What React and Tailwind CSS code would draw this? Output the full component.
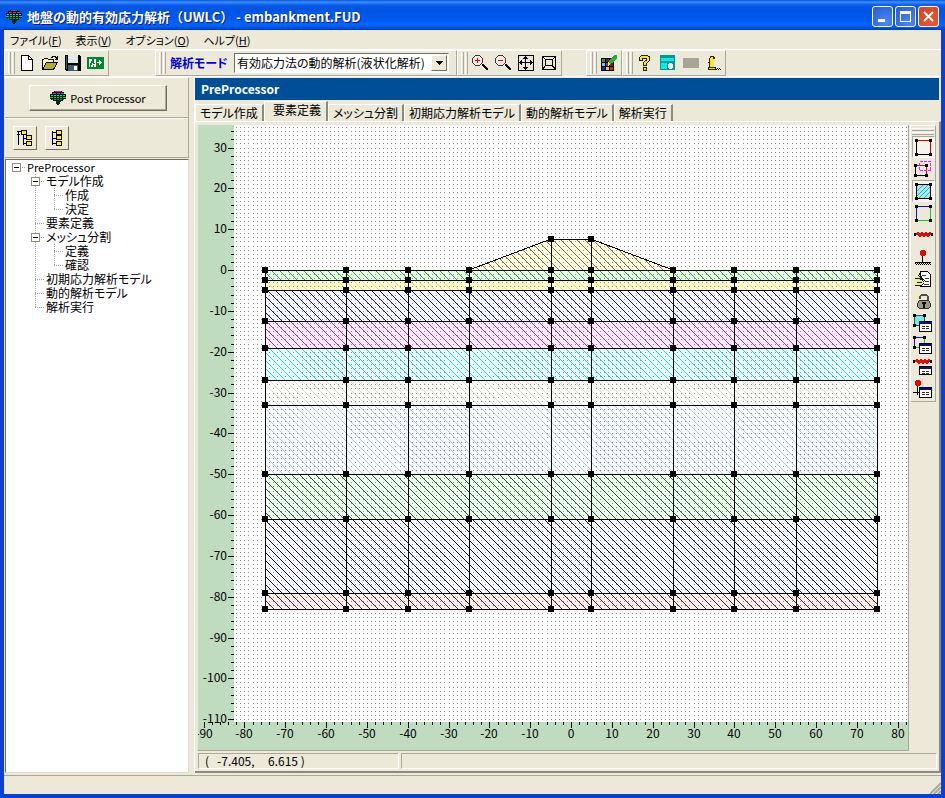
import { useState } from 'react';

const SCALE = 49 / 12;
const px = (v) => Math.round(373 + v * SCALE);
const py = (v) => Math.round(145 - v * SCALE);

const columns = [-75, -55, -40, -25, -5, 5, 25, 40, 55, 75];

const layers = [
  { id: 'l1', top: 0, bottom: -2.5, color: '#10c010', tint: '#ecffec' },
  { id: 'l2', top: -2.5, bottom: -5, color: '#f8ec00', tint: '#ffffe4' },
  { id: 'l3', top: -5, bottom: -12.5, color: '#1010a0', tint: '#f6f6ff' },
  { id: 'l4', top: -12.5, bottom: -19, color: '#c020c0', tint: '#ffeeff' },
  { id: 'l5', top: -19, bottom: -27, color: '#10e0e0', tint: '#ecffff' },
  { id: 'l6', top: -27, bottom: -33, color: '#d4dccb', tint: '#fdfffc' },
  { id: 'l7', top: -33, bottom: -50, color: '#b0c8e0', tint: '#f8fcff' },
  { id: 'l8', top: -50, bottom: -61, color: '#106820', tint: '#f0fff0' },
  { id: 'l9', top: -61, bottom: -79, color: '#101058', tint: '#f8f8ff' },
  { id: 'l10', top: -79, bottom: -83, color: '#681818', tint: '#fff2ee' },
];

const bank = { id: 'bank', color: '#907010', tint: '#fffce8' };
const bankPoints = [[-25, 0], [-5, 7.5], [5, 7.5], [25, 0]];

const range = (from, to, step) => {
  const out = [];
  for (let v = from; v <= to; v += step) out.push(v);
  return out;
};

const tree = [
  { label: 'PreProcessor', cells: ['box'] },
  { label: 'モデル作成', cells: ['none', 'boxMid'] },
  { label: '作成', cells: ['none', 'line', 'tee'] },
  { label: '決定', cells: ['none', 'line', 'end'] },
  { label: '要素定義', cells: ['none', 'tee'] },
  { label: 'メッシュ分割', cells: ['none', 'boxMid'] },
  { label: '定義', cells: ['none', 'line', 'tee'] },
  { label: '確認', cells: ['none', 'line', 'end'] },
  { label: '初期応力解析モデル', cells: ['none', 'tee'] },
  { label: '動的解析モデル', cells: ['none', 'tee'] },
  { label: '解析実行', cells: ['none', 'end'] },
];

const tabs = ['モデル作成', '要素定義', 'メッシュ分割', '初期応力解析モデル', '動的解析モデル', '解析実行'];

const menus = [
  ['ファイル', 'F'],
  ['表示', 'V'],
  ['オプション', 'O'],
  ['ヘルプ', 'H'],
];

function Icon({ w = 16, h = 16, children }) {
  return (
    <svg width={w} height={h} viewBox={`0 0 ${w} ${h}`} shapeRendering="crispEdges" fill="none" aria-hidden="true">
      {children}
    </svg>
  );
}

function LogoIcon() {
  return (
    <Icon>
      <path d="M4 1h8v1h2v2h2v5h-2v1h-1v1h-2v1h-1v2H9v1H7v-1H6v-3H3v-1H1V9H0V4h2V2h2z" fill="#10201c" />
      <path d="M5 1h6v1H5z M3 3h3v1H3z M7 3h3v1H7z M11 3h3v1h-3z" fill="#b030a0" />
      <path d="M1 5h2v1H1z M4 5h2v1H4z M7 5h2v1H7z M10 5h2v1h-2z M13 5h2v1h-2z" fill="#30c8c0" />
      <path d="M0 7h3v1H0z M4 7h2v1H4z M7 7h2v1H7z M10 7h2v1h-2z M13 7h3v1h-3z" fill="#20c848" />
      <path d="M2 9h1v1H2z M4 9h2v1H4z M7 9h2v1H7z M10 9h2v1h-2z M13 9h1v1h-1z" fill="#189840" />
    </Icon>
  );
}

function NewIcon() {
  return (
    <Icon>
      <path d="M2.5 .5h7l4 4v11h-11z" fill="#fff" stroke="#000" />
      <path d="M9.5 .5v4h4" stroke="#000" />
    </Icon>
  );
}

function OpenIcon() {
  return (
    <Icon w={18}>
      <path d="M1.5 14.5v-10h1l1-1h3l1 1h5v3" fill="#ffff90" stroke="#000" />
      <path d="M1.5 14.5l4-7h11l-4 7z" fill="#b0b020" stroke="#000" />
      <path d="M10 2.5h1v-1h3v1h1v1h1M16.5 1v4M14 4.5h3" stroke="#000" />
    </Icon>
  );
}

function SaveIcon() {
  return (
    <Icon>
      <path d="M0 0h15v1h1v15H1v-1H0z" fill="#000" />
      <path d="M3 0h10v8H3z" fill="#e4e8e8" />
      <path d="M3 10h10v6H3z" fill="#406070" />
      <path d="M9 11h3v4H9z" fill="#fff" />
      <path d="M1 1h1v13H1z" fill="#406068" />
    </Icon>
  );
}

function ExitIcon() {
  return (
    <Icon w={17} h={12}>
      <path d="M0 0h17v12H0z" fill="#008830" />
      <path d="M2 2h7v8H2z" fill="#fff" />
      <path d="M5 2h2v2H5z M4 4h3v2H4z M3 6h2v2H3z M6 6h2v1H6z M3 8h1v2H3z M6 8h1v2H6z" fill="#008830" />
      <path d="M10 5.5h5M12.5 3v5M13.5 4v3" stroke="#fff" />
    </Icon>
  );
}

function ZoomIcon({ plus }) {
  return (
    <Icon>
      <path d="M3.5 .5h4l3 3v4l-3 3h-4l-3-3v-4z" fill="#fce6e6" stroke="#383838" />
      <path d="M3 5.5h5" stroke="#e00018" />
      {plus && <path d="M5.5 3v5" stroke="#e00018" />}
      <path d="M10 9h2v1h1v1h1v1h1v1h1v2h-2v-1h-1v-1h-1v-1h-1v-1h-1z" fill="#000" />
    </Icon>
  );
}

function FitIcon() {
  return (
    <Icon>
      <path d="M.5 .5h15v15H.5z M0 7.5h16M7.5 0v16" stroke="#000" />
      <path d="M2 6h1v3H2z M3 5h1v5H3z M12 5h1v5h-1z M13 6h1v3h-1z M6 2h3v1H6z M5 3h5v1H5z M5 12h5v1H5z M6 13h3v1H6z" fill="#000" />
    </Icon>
  );
}

function FrameIcon() {
  return (
    <Icon>
      <path d="M1.5 1.5h13v13h-13z M4.5 4.5h7v6h-7z M2 2l3 3M14 2l-3 3M2 14l3-4M14 14l-3-4" stroke="#000" />
    </Icon>
  );
}

function PaletteIcon() {
  return (
    <Icon>
      <path d="M0 3h13v13H0z" fill="#000" />
      <path d="M1 4h3v3H1z" fill="#20a040" />
      <path d="M5 4h3v3H5z M9 8h3v3H9z" fill="#701850" />
      <path d="M1 8h3v3H1z" fill="#50d8e8" />
      <path d="M5 8h3v3H5z" fill="#a018a8" />
      <path d="M1 12h3v3H1z" fill="#1820e8" />
      <path d="M5 12h3v3H5z" fill="#f0d820" />
      <path d="M9 12h3v3H9z" fill="#e02020" />
      <path d="M13 0h3v3l-5 5-3 2v-4z" fill="#20b040" />
      <path d="M7 7l3 2-3 2z" fill="#f0f020" />
    </Icon>
  );
}

function HelpIcon() {
  return (
    <Icon w={13}>
      <path d="M3 0h7v1h2v5h-1v1h-1v1H9v3H5V7h1V6h1V5h1V4H5v2H1V2h1V1h1z M5 12h4v4H5z" fill="#202000" />
      <path d="M3 1h7v1h1v4h-1v1H9v1H8v2H6V7h1V6h2V3H4v2H2V2h1z M6 13h2v2H6z" fill="#f8e820" />
    </Icon>
  );
}

function WindowIcon() {
  return (
    <Icon>
      <path d="M0 0h15v15H0z" fill="#009898" />
      <path d="M1 3h13v3H1z M1 8h6v6H1z" fill="#10e8e8" />
      <path d="M9 8h3v1h1v4h-1v1H9v-1H8V9h1z" fill="#fff" />
    </Icon>
  );
}

function BlankIcon() {
  return (
    <Icon w={16} h={10}>
      <path d="M0 0h16v10H0z" fill="#a8a498" />
    </Icon>
  );
}

function PersonIcon() {
  return (
    <Icon w={14}>
      <path d="M3 1h4v1h1v2H7v8h2v3H1v-3h1V8H1V7h1V3h1z" fill="#282000" />
      <path d="M4 2h2v1H4z M3 3h3v9H3z M2 13h6v1H2z M6 4h1v8H6z" fill="#f8e820" />
      <path d="M8 12h1v1H8z M9 14h1v1H9z M11 14h1v1h-1z M13 14h1v1h-1z M10 13h1v1h-1z M12 13h1v1h-1z" fill="#000" />
    </Icon>
  );
}

function TreeOpenIcon({ collapsed }) {
  return (
    <Icon>
      {collapsed ? (
        <>
          <path d="M3.5 1v14M3 2.5h4M3 8.5h4M3 13.5h4" stroke="#000" />
          <path d="M7.5 .5h5v4h-5z M7.5 5.5h5v4h-5z M7.5 11.5h5v4h-5z" fill="#fff000" stroke="#000" />
        </>
      ) : (
        <>
          <path d="M1.500 1v14M0 1.500h4M0 4.500h3" stroke="#000" />
          <path d="M6.5 5v10M6 8.500h4M6 13.500h4" stroke="#000" />
          <path d="M4.5 .5h5v4h-5z M9.5 5.5h5v4h-5z M9.5 11.5h5v4h-5z" fill="#fff000" stroke="#000" />
        </>
      )}
    </Icon>
  );
}

function Corners() {
  return <path d="M0 0h3v3H0z M14 0h3v3h-3z M0 14h3v3H0z M14 14h3v3h-3z" fill="#000" />;
}

function MiniWindow({ x, y, h = 10 }) {
  return (
    <g transform={`translate(${x} ${y})`}>
      <path d={`M.5 .5h12v${h}H.5z`} fill="#fff" stroke="#000" />
      <path d="M1 1h12v2H1z" fill="#101080" />
      <path d="M3 5h3v1H3z M7 5h3v1H7z M3 7h3v1H3z M7 7h3v1H7z" fill="#303030" />
    </g>
  );
}

function ZigZag() {
  return (
    <>
      <path d="M2 3l2-2 2 3 2-3 2 3 2-3 2 3 2-3 2 2" stroke="#e80808" strokeWidth="2" />
      <path d="M0 1h2v3H0z M17 1h2v3h-2z" fill="#000" />
    </>
  );
}

const sideTools = [
  {
    label: '要素選択',
    pressed: true,
    icon: (
      <Icon w={17} h={17}>
        <path d="M1.5 1.5v14h14" stroke="#000" />
        <path d="M1.5 1.5h14v14" stroke="#e80000" />
        <Corners />
      </Icon>
    ),
  },
  {
    label: '範囲選択',
    icon: (
      <Icon w={18} h={16}>
        <path d="M1.5 4.5v10h11v-10z" stroke="#000" />
        <path d="M2 4.5h10v9" stroke="#d01010" />
        <path d="M5.5 .5h11v9h-11z" stroke="#ff10ff" strokeDasharray="3 1" />
        <path d="M0 3h3v3H0z M11 3h3v3h-3z M0 13h3v3H0z M11 13h3v3h-3z" fill="#000" />
      </Icon>
    ),
  },
  {
    label: '材料',
    pressed: true,
    icon: (
      <Icon w={17} h={17}>
        <path d="M1.5 1.5h14v14h-14z" fill="#a0ecf0" stroke="#000" />
        <path d="M2 8l6-6M2 13L13 2M4 15L15 4M9 15l6-6" stroke="#38a8b8" />
        <Corners />
      </Icon>
    ),
  },
  {
    label: '境界',
    icon: (
      <Icon w={17} h={17}>
        <path d="M1.5 15.5v-14h14" stroke="#1010d0" />
        <path d="M1.5 15.5h14v-14" stroke="#10d010" />
        <Corners />
      </Icon>
    ),
  },
  { label: 'ばね', icon: <Icon w={19} h={6}><ZigZag /></Icon> },
  {
    label: '支点',
    icon: (
      <Icon w={18} h={16}>
        <path d="M8.5 6v7M1 13.5h16" stroke="#000" />
        <path d="M1 14.5h16M2 15.5h16" stroke="#000" strokeDasharray="1 1" />
        <path d="M7 1h4v1h1v4h-1v1H7V6H6V2h1z" fill="#e00808" />
      </Icon>
    ),
  },
  {
    label: '編集',
    icon: (
      <Icon w={18} h={17}>
        <path d="M6.5 .5h7l3 3v12h-10z" fill="#fff" stroke="#000" />
        <path d="M8 4h4v1H8z M11 7h4v1h-4z M11 10h4v1h-4z M10 13h5v1h-5z" fill="#404040" />
        <path d="M1 7h5l4 3v3l-4 2H1z" fill="#f0f080" />
        <path d="M1 7.5h5l4 3M1 14.5h6l3-2M3 11.5h5M4 4l8 7M5 2l3 5" stroke="#101810" />
      </Icon>
    ),
  },
  {
    label: 'ロック',
    icon: (
      <Icon w={15} h={17}>
        <path d="M4 6V3.500l2-2h4l2 2V8" stroke="#505048" strokeWidth="2" />
        <path d="M3 7h10v1h1v2h1v4h-1v1h-1v1H3v-1H2v-1H1v-4h1V8h1z" fill="#303028" />
        <path d="M3 8h10v2h1v4h-1v1H3v-1H2v-4h1z" fill="#98988c" />
        <path d="M6 9h4v2H9v4H7v-4H6z" fill="#101010" />
        <path d="M0 1h2v2H0z M1 4h2v2H1z M0 7h1v2H0z" fill="#f4f470" />
      </Icon>
    ),
  },
  {
    label: '材料一覧',
    icon: (
      <Icon w={20} h={19}>
        <path d="M1.5 1.5h10v10h-10z" fill="#80e4ec" stroke="#205860" />
        <path d="M0 0h3v3H0z M10 0h3v3h-3z M0 10h3v3H0z" fill="#000" />
        <MiniWindow x={6} y={7} />
      </Icon>
    ),
  },
  {
    label: '境界一覧',
    icon: (
      <Icon w={20} h={19}>
        <path d="M1.5 11.5v-10h10" stroke="#1010d0" />
        <path d="M1.5 11.5h5M11.5 1v7" stroke="#10d010" />
        <path d="M0 0h3v3H0z M10 0h3v3h-3z M0 10h3v3H0z" fill="#000" />
        <MiniWindow x={6} y={7} />
      </Icon>
    ),
  },
  {
    label: 'ばね一覧',
    icon: (
      <Icon w={20} h={17}>
        <ZigZag />
        <MiniWindow x={6} y={7} h={8} />
      </Icon>
    ),
  },
  {
    label: '支点一覧',
    icon: (
      <Icon w={20} h={20}>
        <path d="M4.5 6v10M0 13.5h7" stroke="#000" />
        <path d="M3 1h4v1h1v4H7v1H3V6H2V2h1z" fill="#e00808" />
        <MiniWindow x={6} y={8} />
      </Icon>
    ),
  },
];

function Gripper() {
  return (
    <span className="flex shrink-0 gap-px py-px self-stretch">
      <span className="w-[3px] border-l border-r border-l-white border-r-[#aca899]" />
      <span className="w-[3px] border-l border-r border-l-white border-r-[#aca899]" />
    </span>
  );
}

function ToolGroup({ className, children }) {
  return (
    <div className={`flex h-[26px] shrink-0 items-center border-t border-l border-r border-b border-t-white border-l-white border-r-[#aca899] border-b-[#aca899] pl-[3px] ${className || ''}`}>
      <Gripper />
      {children}
    </div>
  );
}

function ToolButton({ label, children }) {
  return (
    <button type="button" aria-label={label} className="flex h-[22px] w-[23px] shrink-0 items-center justify-center">
      {children}
    </button>
  );
}

function TitleBar() {
  return (
    <header className="flex h-[30px] shrink-0 items-center bg-[linear-gradient(#0a4ed8_0px,#3a90ff_2px,#0a5ce8_5px,#0054e3_10px,#0058ee_18px,#0066ff_25px,#0050e0_28px,#0038b8_30px)] pt-[3px] pr-1.5 pl-1.5 text-white">
      <LogoIcon />
      <h1 className="ml-[5px] flex-1 truncate text-[13px] font-bold leading-5 [font-feature-settings:normal] [text-shadow:1px_1px_#0a1883]">
        地盤の動的有効応力解析（UWLC） - embankment.FUD
      </h1>
      <div className="flex gap-0.5">
        <button type="button" aria-label="最小化" className="flex size-[21px] items-center justify-center rounded-[3px] border border-white bg-[radial-gradient(circle_at_70%_80%,#4a88f8,#2858d8)]">
          <Icon w={15} h={15}><path d="M3 10h7v3H3z" fill="#fff" /></Icon>
        </button>
        <button type="button" aria-label="最大化" className="flex size-[21px] items-center justify-center rounded-[3px] border border-white bg-[radial-gradient(circle_at_70%_80%,#4a88f8,#2858d8)]">
          <Icon w={15} h={15}><path d="M2 2h11v11H2z M3 5v7h9V5z" fill="#fff" fillRule="evenodd" /></Icon>
        </button>
        <button type="button" aria-label="閉じる" className="flex size-[21px] items-center justify-center rounded-[3px] border border-white bg-[radial-gradient(circle_at_70%_80%,#e85830,#d84020)]">
          <svg width="15" height="15" viewBox="0 0 15 15" stroke="#fff" strokeWidth="2"><path d="M3 3l9 9M12 3l-9 9" /></svg>
        </button>
      </div>
    </header>
  );
}

function TreeCell({ kind }) {
  const box = kind === 'box' || kind === 'boxMid';
  return (
    <svg width="19" height="14" viewBox="0 0 19 14" shapeRendering="crispEdges" className="shrink-0" fill="none">
      {(kind === 'line' || kind === 'tee' || kind === 'boxMid') && <path d="M9.5 0v14" stroke="#a0a0a0" strokeDasharray="1 1" />}
      {kind === 'end' && <path d="M9.5 0v8" stroke="#a0a0a0" strokeDasharray="1 1" />}
      {kind !== 'none' && kind !== 'line' && <path d="M9 7.5h10" stroke="#a0a0a0" strokeDasharray="1 1" />}
      {box && <path d="M5.5 3.5h8v8h-8z" fill="#fff" stroke="#8c8c80" />}
      {box && <path d="M7 7.5h5" stroke="#000" />}
    </svg>
  );
}

function SidePanel() {
  return (
    <aside className="flex w-[184px] shrink-0 flex-col">
      <div className="flex flex-col border-t border-r border-b border-t-white border-r-[#aca899] border-b-[#aca899]">
        <div className="flex h-10 items-center border-b border-[#aca899] pl-6">
          <button type="button" className="flex h-[26px] w-[138px] items-center justify-center gap-1 border border-t-white border-l-white border-r-[#716f64] border-b-[#716f64] text-[11px] shadow-[inset_-1px_-1px_#aca899]">
            <LogoIcon />
            Post Processor
          </button>
        </div>
        <div className="flex h-[39px] items-center gap-2 border-t border-white pl-2">
          <button type="button" aria-label="すべて展開" className="flex size-6 items-center justify-center border border-t-white border-l-white border-r-[#716f64] border-b-[#716f64]">
            <TreeOpenIcon />
          </button>
          <button type="button" aria-label="すべて折りたたむ" className="flex size-6 items-center justify-center border border-t-white border-l-white border-r-[#716f64] border-b-[#716f64]">
            <TreeOpenIcon collapsed />
          </button>
        </div>
      </div>
      <ul className="mt-px flex-1 border border-t-[#716f64] border-l-[#716f64] border-r-[#e0ddd0] border-b-[#e0ddd0] bg-white pl-px">
        {tree.map((row, index) => (
          <li key={index} className="flex h-[14px] items-center leading-[14px]">
            {row.cells.map((kind, i) => (
              <TreeCell key={i} kind={kind} />
            ))}
            <span className={index === 0 ? 'pl-px text-[11px]' : 'pl-px'}>{row.label}</span>
          </li>
        ))}
      </ul>
    </aside>
  );
}

function YAxis() {
  return (
    <svg className="size-full overflow-visible" shapeRendering="crispEdges">
      {range(-110, 34, 2).map((v) => (
        <rect key={v} x={v % 10 === 0 ? 30 : 33} y={py(v)} width={v % 10 === 0 ? 6 : 3} height="1" />
      ))}
      {range(-110, 30, 10).map((v) => (
        <text key={v} x="29" y={py(v) + 4} textAnchor="end">{v}</text>
      ))}
    </svg>
  );
}

function XAxis() {
  return (
    <svg className="col-span-2 size-full" shapeRendering="crispEdges">
      {range(-90, 82, 2).map((v) => (
        <rect key={v} x={px(v)} y="0" width="1" height={v % 10 === 0 ? 6 : 3} />
      ))}
      {range(-90, 80, 10).map((v) => (
        <text key={v} x={px(v)} y="16" textAnchor="middle">{v}</text>
      ))}
    </svg>
  );
}

function Mesh() {
  const poly = bankPoints.map(([x, y]) => `${px(x)},${py(y)}`).join(' ');
  const depths = [0, ...layers.map((l) => l.bottom)];
  const left = px(-75);
  const width = px(75) - left;
  const top = py(7.5);
  const steps = range(0, 11, 1).map((i) => Math.round(i * SCALE));

  return (
    <svg className="size-full bg-white" shapeRendering="crispEdges">
      <defs>
        {[...layers, bank].map((l) => (
          <pattern key={l.id} id={l.id} width="8" height="8" patternUnits="userSpaceOnUse">
            {range(0, 7, 1).map((i) => (
              <rect key={i} x={i} y={i} width="1" height="1" fill={l.color} />
            ))}
          </pattern>
        ))}
        {/* one tile is 12 units wide, so every dot lands on a whole pixel */}
        <pattern id="dots" x="373" y="145" width="49" height="49" patternUnits="userSpaceOnUse">
          {steps.map((y) => steps.map((x) => (
            <rect key={`${x}-${y}`} x={x} y={y} width="1" height="1" fill="#8c8c8c" />
          )))}
        </pattern>
      </defs>
      {/* the plot starts 36px right of the axis origin */}
      <g transform="translate(-36 0)">
        {layers.map((l) => (
          <rect key={l.id} x={left} y={py(l.top)} width={width} height={py(l.bottom) - py(l.top)} fill={l.tint} />
        ))}
        <polygon points={poly} fill={bank.tint} />
        <rect x="36" width="100%" height="100%" fill="url(#dots)" />
        {layers.map((l) => (
          <rect key={l.id} x={left} y={py(l.top)} width={width} height={py(l.bottom) - py(l.top)} fill={`url(#${l.id})`} />
        ))}
        <polygon points={poly} fill="url(#bank)" stroke="#000" />
        {depths.map((d) => (
          <rect key={d} x={left} y={py(d)} width={width} height="1" />
        ))}
        {columns.map((c) => {
          const y = Math.abs(c) === 5 ? top : py(0);
          return <rect key={c} x={px(c)} y={y} width="1" height={py(-83) - y} />;
        })}
        {columns.map((c) => {
          const rows = Math.abs(c) === 5 ? [7.5, ...depths] : depths;
          return rows.map((d) => (
            <rect key={`${c}/${d}`} x={px(c) - 3} y={py(d) - 3} width="6" height="6" />
          ));
        })}
      </g>
    </svg>
  );
}

function SideToolbar() {
  return (
    <div className="mr-px ml-px flex w-[26px] shrink-0 flex-col items-center self-start border border-t-white border-l-white border-r-[#aca899] border-b-[#aca899] pb-px">
      <span className="mt-0.5 h-[3px] w-[22px] border-t border-b border-t-white border-b-[#aca899]" />
      <span className="mt-px mb-px h-[3px] w-[22px] border-t border-b border-t-white border-b-[#aca899]" />
      {sideTools.map((tool) => (
        <button
          key={tool.label}
          type="button"
          aria-label={tool.label}
          className={`flex h-[22px] w-[23px] items-center justify-center ${
            tool.pressed
              ? 'border border-t-[#aca899] border-l-[#aca899] border-r-white border-b-white bg-[#f6f4ec]'
              : ''
          }`}
        >
          {tool.icon}
        </button>
      ))}
    </div>
  );
}

function App() {
  const [activeTab, setActiveTab] = useState(1);
  const [mode, setMode] = useState('liquefaction');

  return (
    <div className="flex min-h-screen flex-col rounded-t-lg bg-[#0a3fd8] font-['Noto_Sans_CJK_JP',sans-serif] text-[12px] leading-4 text-black [font-feature-settings:'palt']">
      <TitleBar />
      <div className="mx-1 mb-1 flex flex-1 flex-col bg-[#ece9d8]">
        <nav className="flex h-[19px] shrink-0 items-center gap-3.5 pl-1.5 text-[11px]">
          {menus.map(([name, key]) => (
            <button key={key} type="button">
              {name}(<span className="underline">{key}</span>)
            </button>
          ))}
        </nav>

        <div className="flex shrink-0 border-t border-b border-white">
          <ToolGroup className="w-[105px]">
            <ToolButton label="新規"><NewIcon /></ToolButton>
            <ToolButton label="開く"><OpenIcon /></ToolButton>
            <ToolButton label="保存"><SaveIcon /></ToolButton>
            <ToolButton label="終了"><ExitIcon /></ToolButton>
          </ToolGroup>
          <ToolGroup className="ml-[46px] w-[302px]">
            <label htmlFor="mode" className="ml-1 w-16 shrink-0 font-bold text-[#0000e0]">解析モード</label>
            <span className="relative mr-[7px] flex flex-1">
              <select
                id="mode"
                value={mode}
                onChange={(e) => setMode(e.target.value)}
                className="h-5 w-full appearance-none border border-t-[#716f64] border-l-[#716f64] border-r-white border-b-white bg-white pl-0.5 leading-4"
              >
                <option value="liquefaction">有効応力法の動的解析(液状化解析)</option>
              </select>
              <span className="pointer-events-none absolute top-0.5 right-0.5 flex h-4 w-4 items-center justify-center border border-t-white border-l-white border-r-[#716f64] border-b-[#716f64] bg-[#ece9d8]">
                <Icon w={7} h={4}><path d="M0 0h7v1H6v1H5v1H4v1H3V3H2V2H1V1H0z" fill="#000" /></Icon>
              </span>
            </span>
          </ToolGroup>
          <ToolGroup className="w-[105px]">
            <ToolButton label="拡大"><ZoomIcon plus /></ToolButton>
            <ToolButton label="縮小"><ZoomIcon /></ToolButton>
            <ToolButton label="全体表示"><FitIcon /></ToolButton>
            <ToolButton label="枠表示"><FrameIcon /></ToolButton>
          </ToolGroup>
          <ToolGroup className="ml-6 w-9">
            <ToolButton label="色設定"><PaletteIcon /></ToolButton>
          </ToolGroup>
          <ToolGroup className="w-[104px]">
            <ToolButton label="ヘルプ"><HelpIcon /></ToolButton>
            <ToolButton label="ウィンドウ"><WindowIcon /></ToolButton>
            <ToolButton label="空白"><BlankIcon /></ToolButton>
            <ToolButton label="ユーザー"><PersonIcon /></ToolButton>
          </ToolGroup>
        </div>

        <div className="flex flex-1 gap-[5px] pl-px">
          <SidePanel />
          <main className="flex min-w-0 flex-1 flex-col border-l border-white pt-px">
            <h2 className="mr-0.5 flex h-[22px] shrink-0 items-center bg-[#004e98] pl-1.5 font-bold text-white">PreProcessor</h2>
            <div role="tablist" className="mt-px flex h-5 shrink-0 items-end">
              {tabs.map((tab, index) => (
                <button
                  key={tab}
                  type="button"
                  role="tab"
                  aria-selected={index === activeTab}
                  onClick={() => setActiveTab(index)}
                  className={`flex shrink-0 justify-center border-t border-l border-r-2 border-t-white border-l-white border-r-[#8c8a7c] ${
                    index === activeTab ? 'h-5 pr-[5px] pb-0.5 pl-2' : 'h-[17px] items-center px-1'
                  }`}
                >
                  {tab}
                </button>
              ))}
            </div>
            <div className="flex flex-1 flex-col border-t border-r-2 border-b-2 border-t-white border-r-[#8c8a7c] border-b-[#8c8a7c] pt-[3px] pr-0.5 pl-[3px]">
              <div className="flex flex-1">
                <div className="grid min-h-[400px] min-w-0 flex-1 grid-cols-[36px_1fr] grid-rows-[1fr_28px] border-r border-b border-[#aca899] bg-[#c0dcc0]">
                  <YAxis />
                  <Mesh />
                  <XAxis />
                </div>
                <SideToolbar />
              </div>
              <div className="flex h-5 shrink-0 gap-0.5 pt-0.5 pb-0.5">
                <p className="w-[201px] border border-t-[#aca899] border-l-[#aca899] border-r-white border-b-white pl-1.5 leading-[14px] whitespace-pre">{'(   -7.405,     6.615 )'}</p>
                <p className="flex-1 border border-t-[#aca899] border-l-[#aca899] border-r-white border-b-white" />
              </div>
            </div>
          </main>
        </div>

        <footer className="mt-0.5 flex h-[19px] shrink-0 items-end justify-end border-t border-[#aca899]">
          <svg width="12" height="12" viewBox="0 0 12 12" stroke="#aca899" strokeWidth="2"><path d="M1 12L12 1M5 12l7-7M9 12l3-3" /></svg>
        </footer>
      </div>
    </div>
  );
}

export default App;
